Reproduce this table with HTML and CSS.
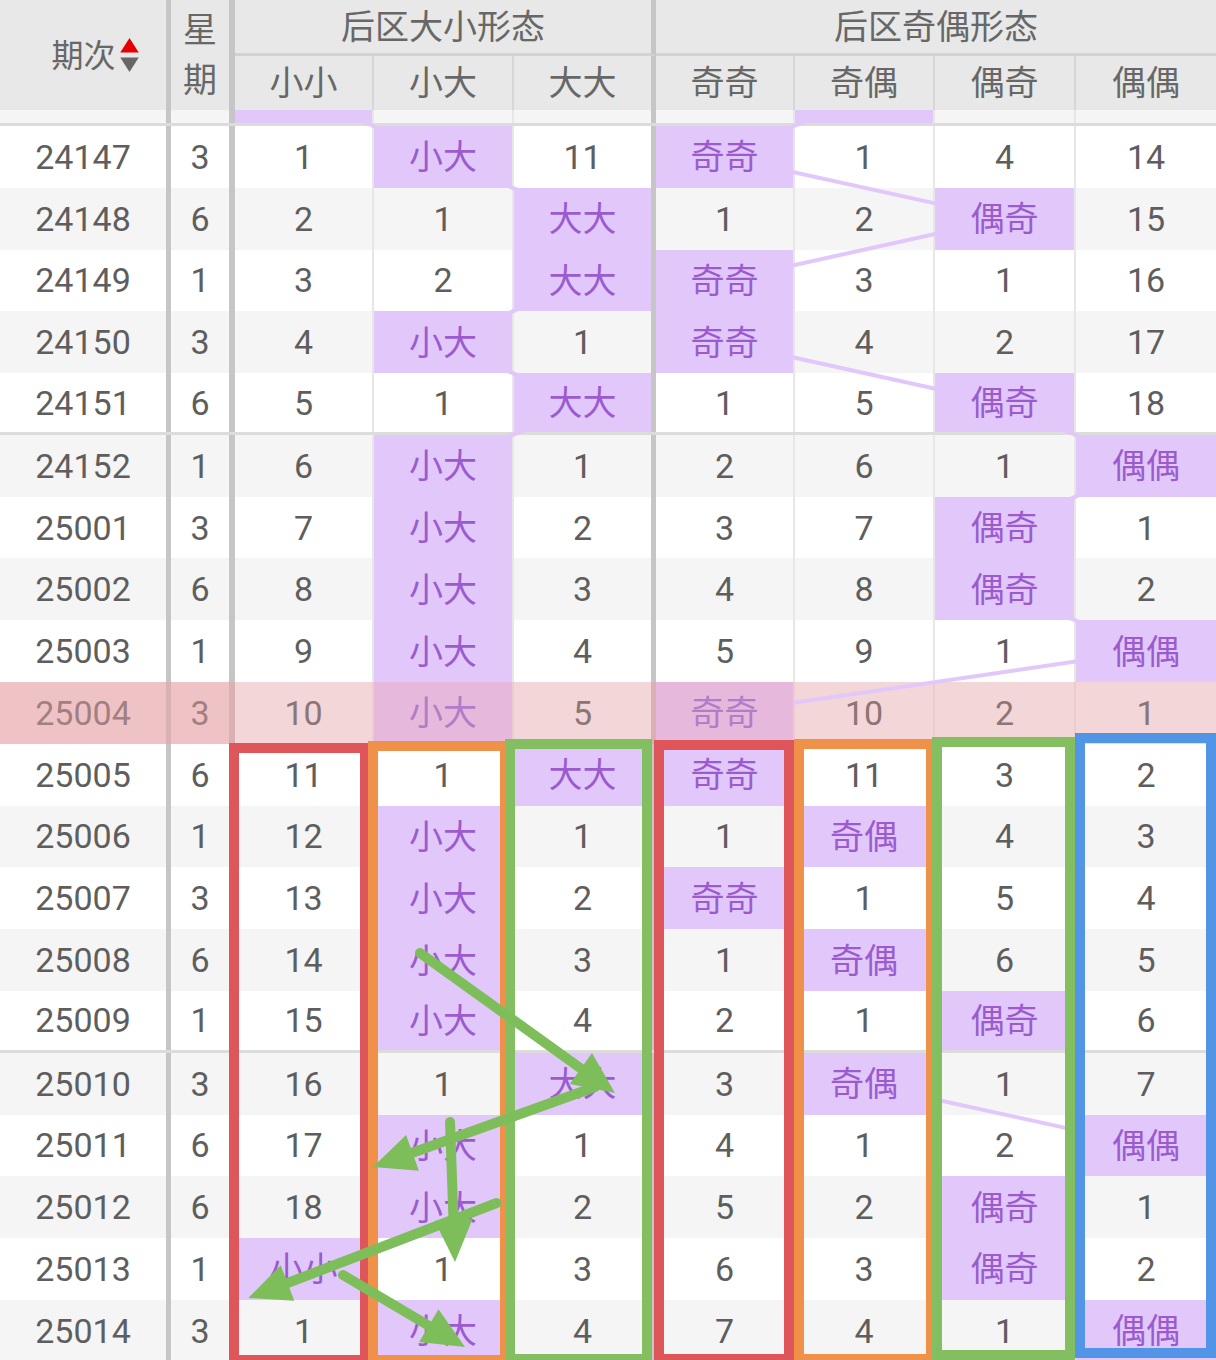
FILE: index.html
```html
<!DOCTYPE html>
<html lang="zh-CN">
<head>
<meta charset="utf-8">
<title>后区形态走势</title>
<link rel="stylesheet" href="styles.css">
</head>
<body>
<div class="page">
  <div class="head">
    <div class="h period">期次<svg class="sort" width="18" height="34" viewBox="0 0 18 34"><polygon points="9,0 18,14 0,14" fill="#e60000"/><polygon points="0,19 18,19 9,33" fill="#666"/></svg></div>
    <div class="h week">星<br>期</div>
    <div class="h grp grp1">后区大小形态</div>
    <div class="h grp grp2">后区奇偶形态</div>
    <div class="h sub">小小</div>
    <div class="h sub">小大</div>
    <div class="h sub subend">大大</div>
    <div class="h sub">奇奇</div>
    <div class="h sub">奇偶</div>
    <div class="h sub">偶奇</div>
    <div class="h sub sublast">偶偶</div>
  </div>

  <div class="body">
    <div class="r g end part"><div class="c"></div><div class="c"></div><div class="c p"></div><div class="c"></div><div class="c"></div><div class="c"></div><div class="c p"></div><div class="c"></div><div class="c"></div></div>
    <div class="r"><div class="c">24147</div><div class="c">3</div><div class="c">1</div><div class="c p">小大</div><div class="c">11</div><div class="c p">奇奇</div><div class="c">1</div><div class="c">4</div><div class="c">14</div></div>
    <div class="r g"><div class="c">24148</div><div class="c">6</div><div class="c">2</div><div class="c">1</div><div class="c p">大大</div><div class="c">1</div><div class="c">2</div><div class="c p">偶奇</div><div class="c">15</div></div>
    <div class="r"><div class="c">24149</div><div class="c">1</div><div class="c">3</div><div class="c">2</div><div class="c p">大大</div><div class="c p">奇奇</div><div class="c">3</div><div class="c">1</div><div class="c">16</div></div>
    <div class="r g"><div class="c">24150</div><div class="c">3</div><div class="c">4</div><div class="c p">小大</div><div class="c">1</div><div class="c p">奇奇</div><div class="c">4</div><div class="c">2</div><div class="c">17</div></div>
    <div class="r end"><div class="c">24151</div><div class="c">6</div><div class="c">5</div><div class="c">1</div><div class="c p">大大</div><div class="c">1</div><div class="c">5</div><div class="c p">偶奇</div><div class="c">18</div></div>
    <div class="r g"><div class="c">24152</div><div class="c">1</div><div class="c">6</div><div class="c p">小大</div><div class="c">1</div><div class="c">2</div><div class="c">6</div><div class="c">1</div><div class="c p">偶偶</div></div>
    <div class="r"><div class="c">25001</div><div class="c">3</div><div class="c">7</div><div class="c p">小大</div><div class="c">2</div><div class="c">3</div><div class="c">7</div><div class="c p">偶奇</div><div class="c">1</div></div>
    <div class="r g"><div class="c">25002</div><div class="c">6</div><div class="c">8</div><div class="c p">小大</div><div class="c">3</div><div class="c">4</div><div class="c">8</div><div class="c p">偶奇</div><div class="c">2</div></div>
    <div class="r"><div class="c">25003</div><div class="c">1</div><div class="c">9</div><div class="c p">小大</div><div class="c">4</div><div class="c">5</div><div class="c">9</div><div class="c">1</div><div class="c p">偶偶</div></div>
    <div class="r hl"><div class="c">25004</div><div class="c">3</div><div class="c">10</div><div class="c p">小大</div><div class="c">5</div><div class="c p">奇奇</div><div class="c">10</div><div class="c">2</div><div class="c">1</div></div>
    <div class="r"><div class="c">25005</div><div class="c">6</div><div class="c">11</div><div class="c">1</div><div class="c p">大大</div><div class="c p">奇奇</div><div class="c">11</div><div class="c">3</div><div class="c">2</div></div>
    <div class="r g"><div class="c">25006</div><div class="c">1</div><div class="c">12</div><div class="c p">小大</div><div class="c">1</div><div class="c">1</div><div class="c p">奇偶</div><div class="c">4</div><div class="c">3</div></div>
    <div class="r"><div class="c">25007</div><div class="c">3</div><div class="c">13</div><div class="c p">小大</div><div class="c">2</div><div class="c p">奇奇</div><div class="c">1</div><div class="c">5</div><div class="c">4</div></div>
    <div class="r g"><div class="c">25008</div><div class="c">6</div><div class="c">14</div><div class="c p">小大</div><div class="c">3</div><div class="c">1</div><div class="c p">奇偶</div><div class="c">6</div><div class="c">5</div></div>
    <div class="r end"><div class="c">25009</div><div class="c">1</div><div class="c">15</div><div class="c p">小大</div><div class="c">4</div><div class="c">2</div><div class="c">1</div><div class="c p">偶奇</div><div class="c">6</div></div>
    <div class="r g"><div class="c">25010</div><div class="c">3</div><div class="c">16</div><div class="c">1</div><div class="c p">大大</div><div class="c">3</div><div class="c p">奇偶</div><div class="c">1</div><div class="c">7</div></div>
    <div class="r"><div class="c">25011</div><div class="c">6</div><div class="c">17</div><div class="c p">小大</div><div class="c">1</div><div class="c">4</div><div class="c">1</div><div class="c">2</div><div class="c p">偶偶</div></div>
    <div class="r g"><div class="c">25012</div><div class="c">6</div><div class="c">18</div><div class="c p">小大</div><div class="c">2</div><div class="c">5</div><div class="c">2</div><div class="c p">偶奇</div><div class="c">1</div></div>
    <div class="r"><div class="c">25013</div><div class="c">1</div><div class="c p">小小</div><div class="c">1</div><div class="c">3</div><div class="c">6</div><div class="c">3</div><div class="c p">偶奇</div><div class="c">2</div></div>
    <div class="r g"><div class="c">25014</div><div class="c">3</div><div class="c">1</div><div class="c p">小大</div><div class="c">4</div><div class="c">7</div><div class="c">4</div><div class="c">1</div><div class="c p">偶偶</div></div>
  </div>

  <svg class="trend" width="1216" height="1360" viewBox="0 0 1216 1360">
    <g stroke="#e2c8fa" stroke-width="4" fill="none">
      <line x1="353.5" y1="117.26" x2="393" y2="134.75"/>
      <line x1="493" y1="179.05" x2="532.5" y2="196.54"/>
      <line x1="532.5" y1="302.63" x2="493" y2="320.12"/>
      <line x1="493" y1="364.42" x2="532.5" y2="381.91"/>
      <line x1="532.5" y1="426.21" x2="493" y2="443.70"/>
      <line x1="508" y1="741.8" x2="532.5" y2="752.65"/>
      <line x1="532.5" y1="796.95" x2="493" y2="814.44"/>
      <line x1="493" y1="1044.11" x2="532.5" y2="1061.6"/>
      <line x1="532.5" y1="1105.9" x2="493" y2="1123.39"/>
      <line x1="393" y1="1229.48" x2="353.5" y2="1246.97"/>
      <line x1="353.5" y1="1291.27" x2="393" y2="1308.76"/>

      <line x1="814" y1="117.26" x2="774.5" y2="134.75"/>
      <line x1="774.5" y1="167.93" x2="954.5" y2="207.66"/>
      <line x1="954.5" y1="229.72" x2="774.5" y2="269.45"/>
      <line x1="774.5" y1="353.30" x2="954.5" y2="393.03"/>
      <line x1="1054.5" y1="425.9" x2="1096" y2="444.01"/>
      <line x1="1096" y1="487.69" x2="1054.5" y2="505.8"/>
      <line x1="1054.5" y1="611.27" x2="1096" y2="629.38"/>
      <line x1="1096" y1="658.55" x2="794" y2="702.8"/>
      <line x1="774.5" y1="796.95" x2="814" y2="814.44"/>
      <line x1="814" y1="858.74" x2="774.5" y2="876.23"/>
      <line x1="774.5" y1="920.53" x2="814" y2="938.02"/>
      <line x1="914" y1="982.16" x2="954.5" y2="999.97"/>
      <line x1="954.5" y1="1043.95" x2="914" y2="1061.76"/>
      <line x1="914" y1="1094.71" x2="1096" y2="1134.58"/>
      <line x1="1096" y1="1167.38" x2="1054.5" y2="1185.49"/>
      <line x1="1054.5" y1="1290.96" x2="1096" y2="1309.07"/>
    </g>
  </svg>

  <div class="box red b1"></div>
  <div class="box orange b2"></div>
  <div class="box green b3"></div>
  <div class="box red b4"></div>
  <div class="box orange b5"></div>
  <div class="box green b6"></div>
  <div class="box blue b7"></div>

  <svg class="arrows" width="1216" height="1360" viewBox="0 0 1216 1360">
    <g stroke="#7dbe5b" stroke-width="10" stroke-linecap="round" fill="none">
      <line x1="420" y1="953" x2="580.9" y2="1068.5"/>
      <line x1="595" y1="1087" x2="412.5" y2="1152.8"/>
      <line x1="450" y1="1122" x2="453.5" y2="1220"/>
      <line x1="496.7" y1="1203" x2="287.5" y2="1283"/>
      <line x1="343" y1="1275" x2="428.8" y2="1325.7"/>
    </g>
    <g fill="#7dbe5b">
      <polygon points="615,1093 569.8,1083.9 592.0,1053.1"/>
      <polygon points="373,1167 406.1,1134.9 418.9,1170.7"/>
      <polygon points="455,1262 434.5,1220.7 472.5,1219.3"/>
      <polygon points="248.3,1298 280.7,1265.2 294.3,1300.8"/>
      <polygon points="465,1347 419.2,1342.1 438.5,1309.3"/>
    </g>
  </svg>
</div>
</body>
</html>
```

FILE: styles.css
```css
* {
  box-sizing: border-box;
  margin: 0;
  padding: 0;
}

html, body {
  margin: 0;
  background: #ffffff;
}

body {
  font-family: Roboto, "Noto Sans CJK SC", "Noto Sans", sans-serif;
}

.page {
  position: relative;
  width: 1216px;
  height: 1360px;
  overflow: hidden;
  background: #ffffff;
}

/* ---------- header ---------- */
.head {
  position: relative;
  z-index: 5;
  display: grid;
  grid-template-columns: 171px 64px 139px 140px 142px 139px 140px 141px 140px;
  grid-template-rows: 56px 54px;
  height: 110px;
  background: #e8e8e8;
  color: #676767;
  font-size: 34px;
}

.h {
  display: flex;
  align-items: center;
  justify-content: center;
  white-space: nowrap;
}

.period {
  grid-column: 1;
  grid-row: 1 / 3;
  border-right: 5px solid #c6c6c6;
  padding-left: 24px;
  padding-bottom: 4px;
  gap: 4px;
  font-size: 32px;
}

.sort {
  display: block;
  margin-top: 4px;
  width: 19px;
  height: 35px;
}

.week {
  grid-column: 2;
  grid-row: 1 / 3;
  border-right: 6px solid #c6c6c6;
  line-height: 50px;
  text-align: center;
  white-space: normal;
}

.grp {
  grid-row: 1;
  border-bottom: 3px solid #d2d2d2;
  padding-bottom: 4px;
}

.grp1 {
  grid-column: 3 / 6;
  border-right: 5px solid #c6c6c6;
}

.grp2 {
  grid-column: 6 / 10;
}

.sub {
  grid-row: 2;
  border-right: 2px solid #d6d6d6;
  padding-bottom: 5px;
}

.subend {
  border-right: 5px solid #c6c6c6;
}

.sublast {
  border-right: none;
}

/* ---------- body ---------- */
.body {
  position: relative;
}

.r {
  display: grid;
  grid-template-columns: 171px 64px 139px 140px 142px 139px 140px 141px 140px;
  height: 61.79px;
  background: #ffffff;
  color: #5e5e5e;
  font-size: 34px;
}

.r.g {
  background: #f5f5f5;
}

.r.end {
  border-bottom: 3px solid #dcdcdc;
}

.r.part {
  height: 16px;
}

.c {
  display: flex;
  align-items: center;
  justify-content: center;
  border-right: 2px solid #e7e7e7;
  white-space: nowrap;
}

.r > .c:nth-child(1),
.r > .c:nth-child(5) {
  border-right: 5px solid #c6c6c6;
}

.r > .c:nth-child(2) {
  border-right: 6px solid #c6c6c6;
}

.r > .c:nth-child(9) {
  border-right: none;
}

.c.p {
  background: #e2c8fa;
  color: #9b5bcf;
  padding-bottom: 4px;
}

/* highlighted (current) row */
.r.hl {
  background: #f2d6d8;
  color: #8c7575;
}

.r.hl > .c {
  border-right-color: #ebcdd0;
}

.r.hl > .c:nth-child(1),
.r.hl > .c:nth-child(2) {
  background: #efc3c6;
  color: #a27f81;
  border-right-color: #d9b1b4;
}

.r.hl > .c:nth-child(5) {
  border-right-color: #d9b1b4;
}

.r.hl > .c.p {
  background: #e6b8dc;
  color: #b27cc8;
}

/* ---------- overlays ---------- */
.trend {
  position: absolute;
  left: 0;
  top: 0;
  z-index: 1;
  pointer-events: none;
}

.box {
  position: absolute;
  z-index: 2;
  border: 10px solid;
}

.red { border-color: #de565a; }
.orange { border-color: #f0914a; }
.green { border-color: #83be60; }
.blue { border-color: #5294e6; }

.b1 { left: 229px; top: 743px; width: 141px; height: 622px; }
.b2 { left: 368px; top: 741px; width: 142px; height: 624px; }
.b3 { left: 505px; top: 739px; width: 147px; height: 625px; }
.b4 { left: 654px; top: 740px; width: 140px; height: 624px; }
.b5 { left: 794px; top: 739px; width: 142px; height: 625px; }
.b6 { left: 932px; top: 737px; width: 143px; height: 623px; }
.b7 { left: 1075px; top: 733px; width: 141px; height: 625px; }

.arrows {
  position: absolute;
  left: 0;
  top: 0;
  z-index: 3;
  pointer-events: none;
}
```
